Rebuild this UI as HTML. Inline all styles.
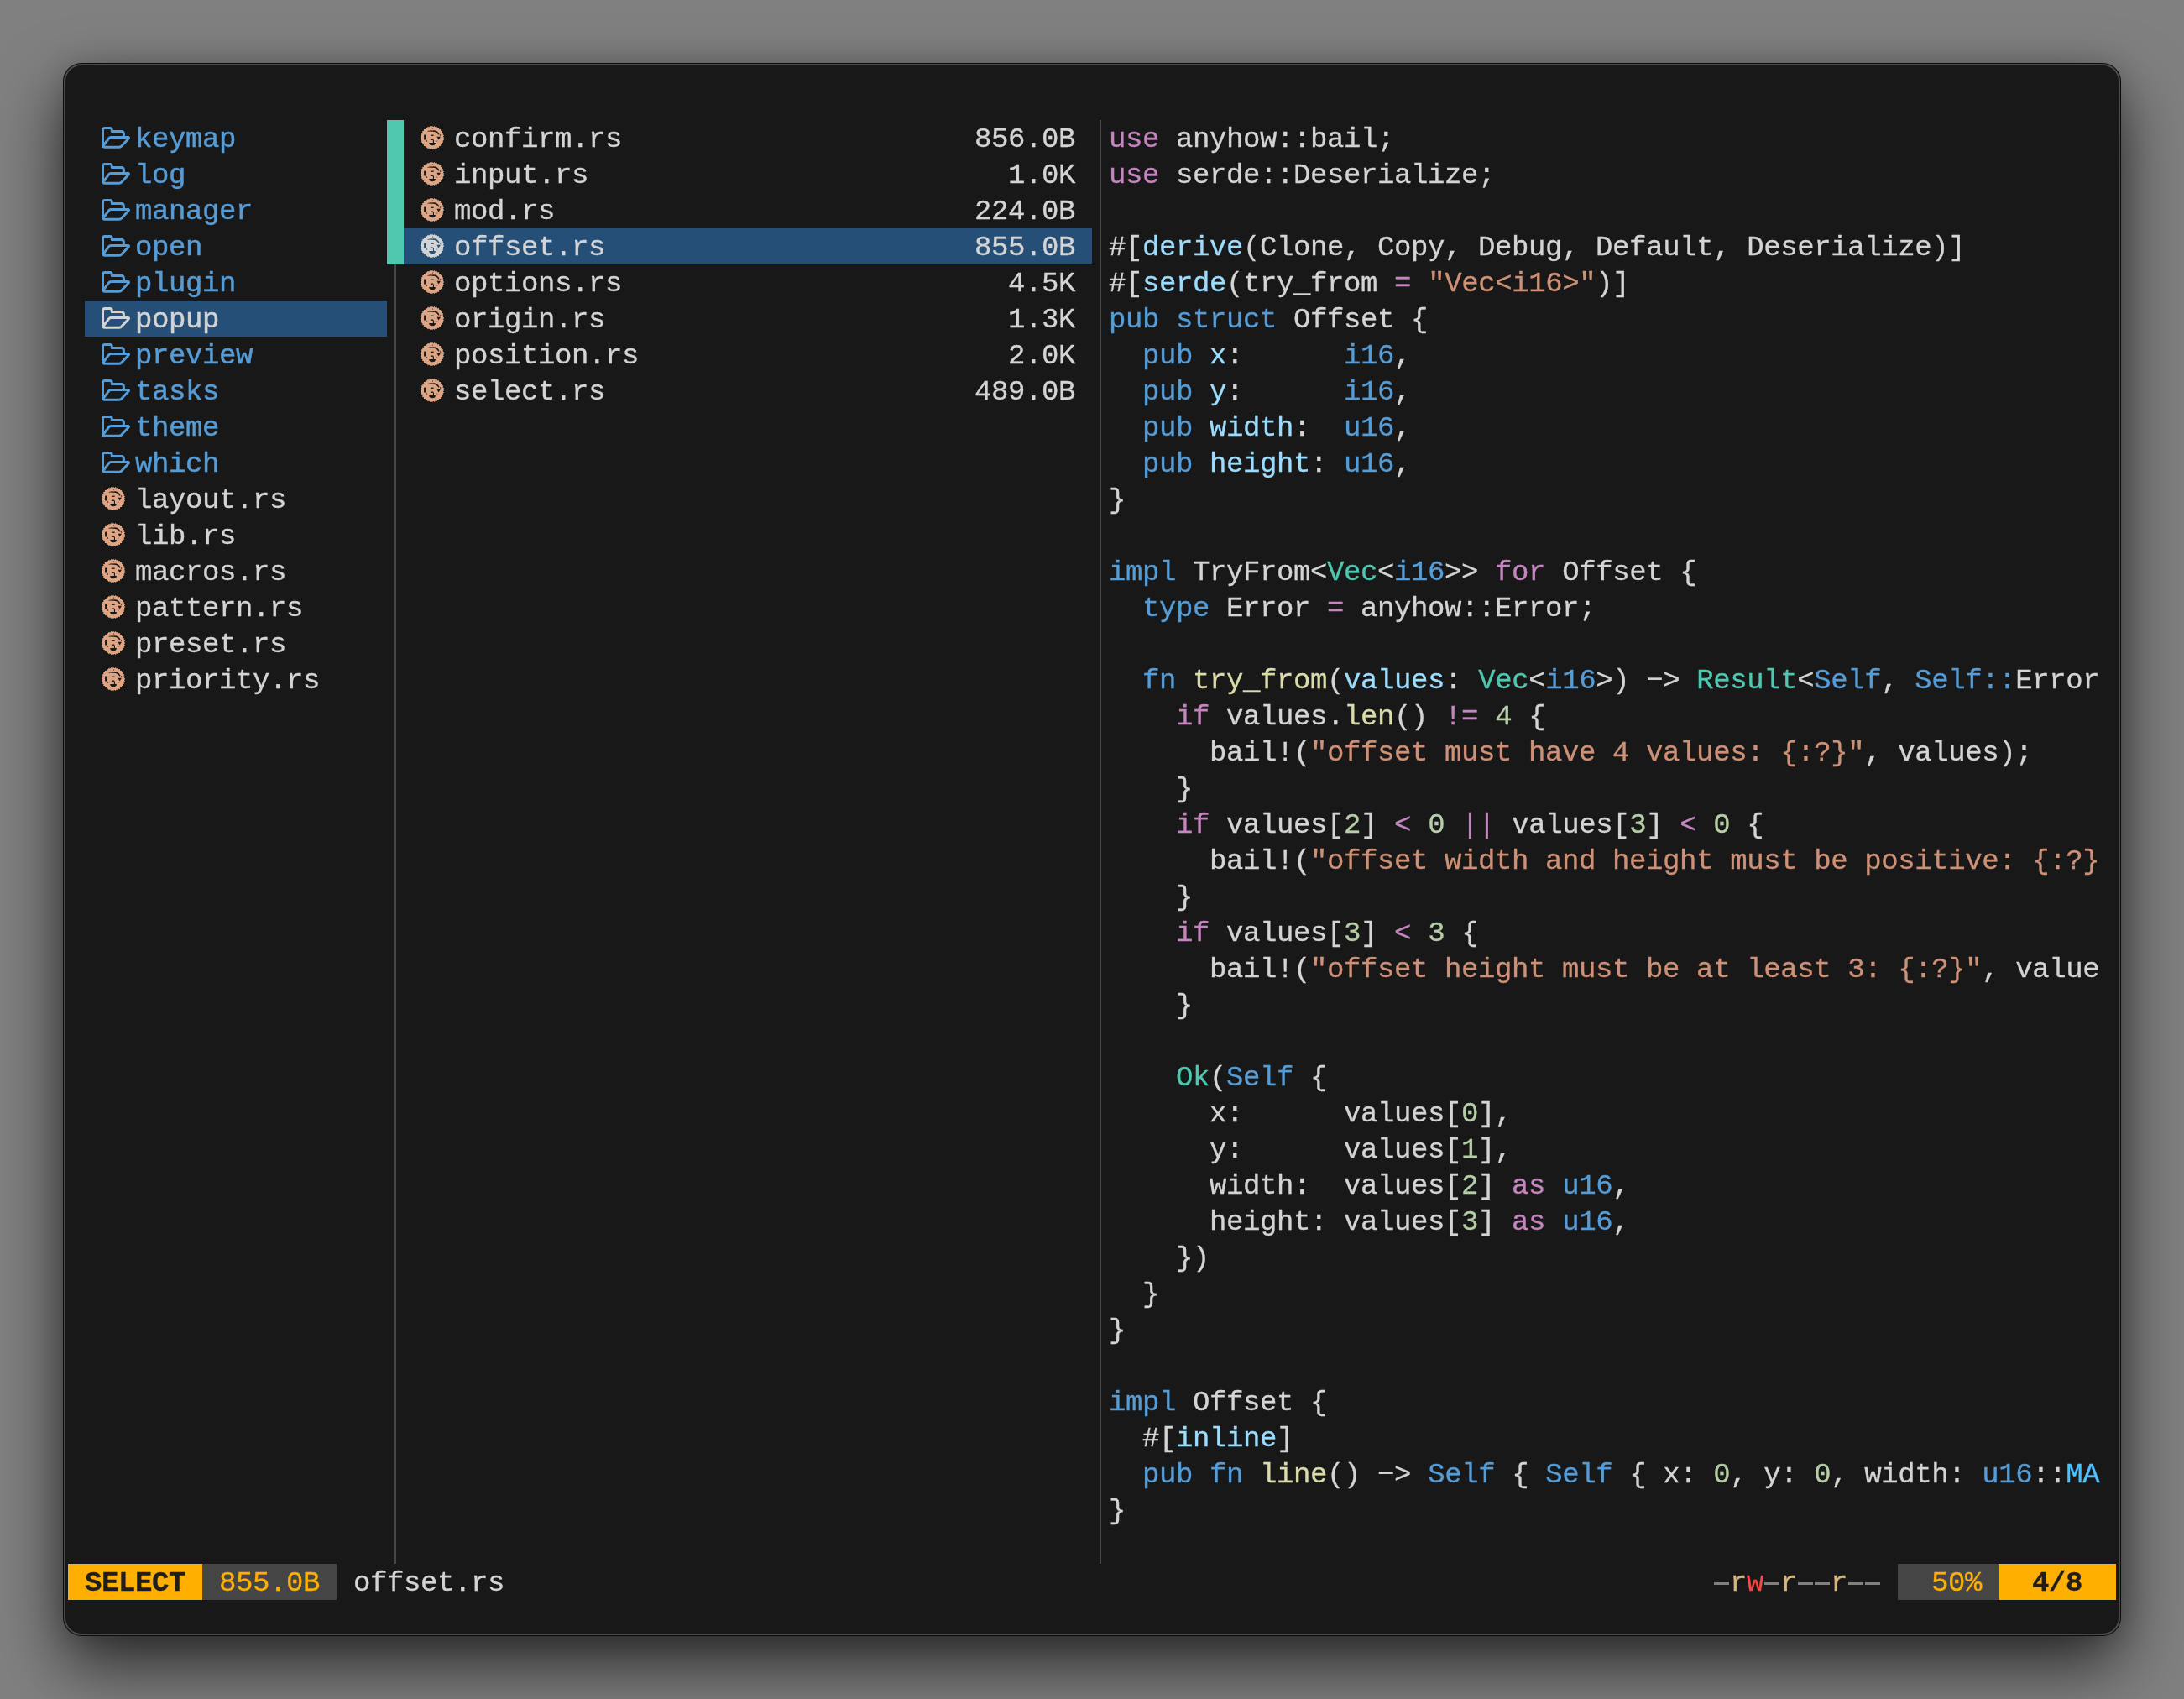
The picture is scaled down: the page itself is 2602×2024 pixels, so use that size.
<!DOCTYPE html>
<html><head><meta charset="utf-8"><style>
html,body{margin:0;padding:0;width:2602px;height:2024px;overflow:hidden;background:#808080;}
.win{position:absolute;left:76px;top:76px;width:2450px;height:1872px;border-radius:21px;background:#181818;
 box-shadow:0 0 0 1px #0a0a0a, inset 0 0 0 2px #4a4a4a, 0 34px 80px rgba(0,0,0,0.7), 0 0 30px rgba(0,0,0,0.15);}
.l{position:absolute;will-change:transform;font-family:"Liberation Mono",monospace;font-size:34px;letter-spacing:-0.4px;white-space:pre;line-height:43px;height:43px;color:#d4d4d4;-webkit-text-stroke:0.3px currentColor;}
.b{font-weight:bold;}
.m span{-webkit-text-stroke:0.45px currentColor;}
.l span{}
.r{position:absolute;}
.ic{position:absolute;}
</style></head><body>
<div class="win"></div>
<div class="r" style="left:101px;top:358px;width:360px;height:43px;background:#264f78;"></div>
<div class="r" style="left:481px;top:272px;width:820px;height:43px;background:#264f78;"></div>
<div class="r" style="left:461px;top:143px;width:20px;height:172px;background:#4ec9b0;"></div>
<div class="r" style="left:81px;top:1863px;width:160px;height:43px;background:#ffaf00;"></div>
<div class="r" style="left:241px;top:1863px;width:160px;height:43px;background:#454545;"></div>
<div class="r" style="left:2261px;top:1863px;width:120px;height:43px;background:#454545;"></div>
<div class="r" style="left:2381px;top:1863px;width:140px;height:43px;background:#ffaf00;"></div>
<div class="r" style="left:2042px;top:1885px;width:18px;height:3px;background:#808080"></div>
<div class="r" style="left:2102px;top:1885px;width:18px;height:3px;background:#808080"></div>
<div class="r" style="left:2142px;top:1885px;width:18px;height:3px;background:#808080"></div>
<div class="r" style="left:2162px;top:1885px;width:18px;height:3px;background:#808080"></div>
<div class="r" style="left:2202px;top:1885px;width:18px;height:3px;background:#808080"></div>
<div class="r" style="left:2222px;top:1885px;width:18px;height:3px;background:#808080"></div>
<div class="r" style="left:470px;top:315px;width:2px;height:1548px;background:#464646"></div><div class="r" style="left:1310px;top:143px;width:2px;height:1720px;background:#464646"></div>
<svg class="ic" style="left:121px;top:151px" width="36" height="30" viewBox="0 0 36 30"><path d="M26.4 12.5V8.5Q26.4 5.5 23.5 5.5H12.3V4Q12.3 1.5 9.8 1.5H4Q1.5 1.5 1.5 4V21.7Q1.5 24.2 4 24.2H21Q22.8 24.2 24 22.8L32.2 14Q33.2 12.5 31.4 12.5H11Q9.6 12.5 8.8 13.6L2.2 22.4" fill="none" stroke="#569cd6" stroke-width="3" stroke-linejoin="round" stroke-linecap="round"/></svg>
<svg class="ic" style="left:121px;top:194px" width="36" height="30" viewBox="0 0 36 30"><path d="M26.4 12.5V8.5Q26.4 5.5 23.5 5.5H12.3V4Q12.3 1.5 9.8 1.5H4Q1.5 1.5 1.5 4V21.7Q1.5 24.2 4 24.2H21Q22.8 24.2 24 22.8L32.2 14Q33.2 12.5 31.4 12.5H11Q9.6 12.5 8.8 13.6L2.2 22.4" fill="none" stroke="#569cd6" stroke-width="3" stroke-linejoin="round" stroke-linecap="round"/></svg>
<svg class="ic" style="left:121px;top:237px" width="36" height="30" viewBox="0 0 36 30"><path d="M26.4 12.5V8.5Q26.4 5.5 23.5 5.5H12.3V4Q12.3 1.5 9.8 1.5H4Q1.5 1.5 1.5 4V21.7Q1.5 24.2 4 24.2H21Q22.8 24.2 24 22.8L32.2 14Q33.2 12.5 31.4 12.5H11Q9.6 12.5 8.8 13.6L2.2 22.4" fill="none" stroke="#569cd6" stroke-width="3" stroke-linejoin="round" stroke-linecap="round"/></svg>
<svg class="ic" style="left:121px;top:280px" width="36" height="30" viewBox="0 0 36 30"><path d="M26.4 12.5V8.5Q26.4 5.5 23.5 5.5H12.3V4Q12.3 1.5 9.8 1.5H4Q1.5 1.5 1.5 4V21.7Q1.5 24.2 4 24.2H21Q22.8 24.2 24 22.8L32.2 14Q33.2 12.5 31.4 12.5H11Q9.6 12.5 8.8 13.6L2.2 22.4" fill="none" stroke="#569cd6" stroke-width="3" stroke-linejoin="round" stroke-linecap="round"/></svg>
<svg class="ic" style="left:121px;top:323px" width="36" height="30" viewBox="0 0 36 30"><path d="M26.4 12.5V8.5Q26.4 5.5 23.5 5.5H12.3V4Q12.3 1.5 9.8 1.5H4Q1.5 1.5 1.5 4V21.7Q1.5 24.2 4 24.2H21Q22.8 24.2 24 22.8L32.2 14Q33.2 12.5 31.4 12.5H11Q9.6 12.5 8.8 13.6L2.2 22.4" fill="none" stroke="#569cd6" stroke-width="3" stroke-linejoin="round" stroke-linecap="round"/></svg>
<svg class="ic" style="left:121px;top:366px" width="36" height="30" viewBox="0 0 36 30"><path d="M26.4 12.5V8.5Q26.4 5.5 23.5 5.5H12.3V4Q12.3 1.5 9.8 1.5H4Q1.5 1.5 1.5 4V21.7Q1.5 24.2 4 24.2H21Q22.8 24.2 24 22.8L32.2 14Q33.2 12.5 31.4 12.5H11Q9.6 12.5 8.8 13.6L2.2 22.4" fill="none" stroke="#d4d4d4" stroke-width="3" stroke-linejoin="round" stroke-linecap="round"/></svg>
<svg class="ic" style="left:121px;top:409px" width="36" height="30" viewBox="0 0 36 30"><path d="M26.4 12.5V8.5Q26.4 5.5 23.5 5.5H12.3V4Q12.3 1.5 9.8 1.5H4Q1.5 1.5 1.5 4V21.7Q1.5 24.2 4 24.2H21Q22.8 24.2 24 22.8L32.2 14Q33.2 12.5 31.4 12.5H11Q9.6 12.5 8.8 13.6L2.2 22.4" fill="none" stroke="#569cd6" stroke-width="3" stroke-linejoin="round" stroke-linecap="round"/></svg>
<svg class="ic" style="left:121px;top:452px" width="36" height="30" viewBox="0 0 36 30"><path d="M26.4 12.5V8.5Q26.4 5.5 23.5 5.5H12.3V4Q12.3 1.5 9.8 1.5H4Q1.5 1.5 1.5 4V21.7Q1.5 24.2 4 24.2H21Q22.8 24.2 24 22.8L32.2 14Q33.2 12.5 31.4 12.5H11Q9.6 12.5 8.8 13.6L2.2 22.4" fill="none" stroke="#569cd6" stroke-width="3" stroke-linejoin="round" stroke-linecap="round"/></svg>
<svg class="ic" style="left:121px;top:495px" width="36" height="30" viewBox="0 0 36 30"><path d="M26.4 12.5V8.5Q26.4 5.5 23.5 5.5H12.3V4Q12.3 1.5 9.8 1.5H4Q1.5 1.5 1.5 4V21.7Q1.5 24.2 4 24.2H21Q22.8 24.2 24 22.8L32.2 14Q33.2 12.5 31.4 12.5H11Q9.6 12.5 8.8 13.6L2.2 22.4" fill="none" stroke="#569cd6" stroke-width="3" stroke-linejoin="round" stroke-linecap="round"/></svg>
<svg class="ic" style="left:121px;top:538px" width="36" height="30" viewBox="0 0 36 30"><path d="M26.4 12.5V8.5Q26.4 5.5 23.5 5.5H12.3V4Q12.3 1.5 9.8 1.5H4Q1.5 1.5 1.5 4V21.7Q1.5 24.2 4 24.2H21Q22.8 24.2 24 22.8L32.2 14Q33.2 12.5 31.4 12.5H11Q9.6 12.5 8.8 13.6L2.2 22.4" fill="none" stroke="#569cd6" stroke-width="3" stroke-linejoin="round" stroke-linecap="round"/></svg>
<svg class="ic" style="left:118.7px;top:577.8px" width="32" height="32" viewBox="-16 -16 32 32"><circle r="13" fill="#dea584"/><path d="M0.00 -14.30L1.26 -12.84L2.79 -14.03L3.74 -12.34L5.47 -13.21L6.08 -11.38L7.94 -11.89L8.18 -9.97L10.11 -10.11L9.97 -8.18L11.89 -7.94L11.38 -6.08L13.21 -5.47L12.34 -3.74L14.03 -2.79L12.84 -1.26L14.30 0.00L12.84 1.26L14.03 2.79L12.34 3.74L13.21 5.47L11.38 6.08L11.89 7.94L9.97 8.18L10.11 10.11L8.18 9.97L7.94 11.89L6.08 11.38L5.47 13.21L3.74 12.34L2.79 14.03L1.26 12.84L0.00 14.30L-1.26 12.84L-2.79 14.03L-3.74 12.34L-5.47 13.21L-6.08 11.38L-7.94 11.89L-8.18 9.97L-10.11 10.11L-9.97 8.18L-11.89 7.94L-11.38 6.08L-13.21 5.47L-12.34 3.74L-14.03 2.79L-12.84 1.26L-14.30 0.00L-12.84 -1.26L-14.03 -2.79L-12.34 -3.74L-13.21 -5.47L-11.38 -6.08L-11.89 -7.94L-9.97 -8.18L-10.11 -10.11L-8.18 -9.97L-7.94 -11.89L-6.08 -11.38L-5.47 -13.21L-3.74 -12.34L-2.79 -14.03L-1.26 -12.84Z" fill="#dea584"/><g fill="#181818" stroke="none"><path d="M-6.2 -7.2Q-4 -9.4 0.3 -8.6Q6.5 -9.2 8.6 -3.8L7.2 -3.4Q5.5 -7.3 0.3 -7.2Q-4 -7.6 -6.2 -7.2Z"/><rect x="-9.9" y="-3.4" width="2.7" height="5.9"/><rect x="-2.1" y="-3.4" width="3.8" height="1.3"/><rect x="-2.1" y="1.5" width="3.2" height="1.4"/><rect x="0.9" y="2.5" width="1.1" height="4"/><path d="M-3.8 6H3.9Q3.9 9.2 0 9.2Q-3.8 9.2 -3.8 6Z"/><path d="M5.5 -1.3H10L7.5 2.5Z"/><circle cx="0.6" cy="-11" r="0.6"/><circle cx="9.6" cy="-3" r="0.7"/><circle cx="-6.5" cy="4" r="0.7"/><circle cx="5.9" cy="4" r="0.5"/></g></svg>
<svg class="ic" style="left:118.7px;top:620.8px" width="32" height="32" viewBox="-16 -16 32 32"><circle r="13" fill="#dea584"/><path d="M0.00 -14.30L1.26 -12.84L2.79 -14.03L3.74 -12.34L5.47 -13.21L6.08 -11.38L7.94 -11.89L8.18 -9.97L10.11 -10.11L9.97 -8.18L11.89 -7.94L11.38 -6.08L13.21 -5.47L12.34 -3.74L14.03 -2.79L12.84 -1.26L14.30 0.00L12.84 1.26L14.03 2.79L12.34 3.74L13.21 5.47L11.38 6.08L11.89 7.94L9.97 8.18L10.11 10.11L8.18 9.97L7.94 11.89L6.08 11.38L5.47 13.21L3.74 12.34L2.79 14.03L1.26 12.84L0.00 14.30L-1.26 12.84L-2.79 14.03L-3.74 12.34L-5.47 13.21L-6.08 11.38L-7.94 11.89L-8.18 9.97L-10.11 10.11L-9.97 8.18L-11.89 7.94L-11.38 6.08L-13.21 5.47L-12.34 3.74L-14.03 2.79L-12.84 1.26L-14.30 0.00L-12.84 -1.26L-14.03 -2.79L-12.34 -3.74L-13.21 -5.47L-11.38 -6.08L-11.89 -7.94L-9.97 -8.18L-10.11 -10.11L-8.18 -9.97L-7.94 -11.89L-6.08 -11.38L-5.47 -13.21L-3.74 -12.34L-2.79 -14.03L-1.26 -12.84Z" fill="#dea584"/><g fill="#181818" stroke="none"><path d="M-6.2 -7.2Q-4 -9.4 0.3 -8.6Q6.5 -9.2 8.6 -3.8L7.2 -3.4Q5.5 -7.3 0.3 -7.2Q-4 -7.6 -6.2 -7.2Z"/><rect x="-9.9" y="-3.4" width="2.7" height="5.9"/><rect x="-2.1" y="-3.4" width="3.8" height="1.3"/><rect x="-2.1" y="1.5" width="3.2" height="1.4"/><rect x="0.9" y="2.5" width="1.1" height="4"/><path d="M-3.8 6H3.9Q3.9 9.2 0 9.2Q-3.8 9.2 -3.8 6Z"/><path d="M5.5 -1.3H10L7.5 2.5Z"/><circle cx="0.6" cy="-11" r="0.6"/><circle cx="9.6" cy="-3" r="0.7"/><circle cx="-6.5" cy="4" r="0.7"/><circle cx="5.9" cy="4" r="0.5"/></g></svg>
<svg class="ic" style="left:118.7px;top:663.8px" width="32" height="32" viewBox="-16 -16 32 32"><circle r="13" fill="#dea584"/><path d="M0.00 -14.30L1.26 -12.84L2.79 -14.03L3.74 -12.34L5.47 -13.21L6.08 -11.38L7.94 -11.89L8.18 -9.97L10.11 -10.11L9.97 -8.18L11.89 -7.94L11.38 -6.08L13.21 -5.47L12.34 -3.74L14.03 -2.79L12.84 -1.26L14.30 0.00L12.84 1.26L14.03 2.79L12.34 3.74L13.21 5.47L11.38 6.08L11.89 7.94L9.97 8.18L10.11 10.11L8.18 9.97L7.94 11.89L6.08 11.38L5.47 13.21L3.74 12.34L2.79 14.03L1.26 12.84L0.00 14.30L-1.26 12.84L-2.79 14.03L-3.74 12.34L-5.47 13.21L-6.08 11.38L-7.94 11.89L-8.18 9.97L-10.11 10.11L-9.97 8.18L-11.89 7.94L-11.38 6.08L-13.21 5.47L-12.34 3.74L-14.03 2.79L-12.84 1.26L-14.30 0.00L-12.84 -1.26L-14.03 -2.79L-12.34 -3.74L-13.21 -5.47L-11.38 -6.08L-11.89 -7.94L-9.97 -8.18L-10.11 -10.11L-8.18 -9.97L-7.94 -11.89L-6.08 -11.38L-5.47 -13.21L-3.74 -12.34L-2.79 -14.03L-1.26 -12.84Z" fill="#dea584"/><g fill="#181818" stroke="none"><path d="M-6.2 -7.2Q-4 -9.4 0.3 -8.6Q6.5 -9.2 8.6 -3.8L7.2 -3.4Q5.5 -7.3 0.3 -7.2Q-4 -7.6 -6.2 -7.2Z"/><rect x="-9.9" y="-3.4" width="2.7" height="5.9"/><rect x="-2.1" y="-3.4" width="3.8" height="1.3"/><rect x="-2.1" y="1.5" width="3.2" height="1.4"/><rect x="0.9" y="2.5" width="1.1" height="4"/><path d="M-3.8 6H3.9Q3.9 9.2 0 9.2Q-3.8 9.2 -3.8 6Z"/><path d="M5.5 -1.3H10L7.5 2.5Z"/><circle cx="0.6" cy="-11" r="0.6"/><circle cx="9.6" cy="-3" r="0.7"/><circle cx="-6.5" cy="4" r="0.7"/><circle cx="5.9" cy="4" r="0.5"/></g></svg>
<svg class="ic" style="left:118.7px;top:706.8px" width="32" height="32" viewBox="-16 -16 32 32"><circle r="13" fill="#dea584"/><path d="M0.00 -14.30L1.26 -12.84L2.79 -14.03L3.74 -12.34L5.47 -13.21L6.08 -11.38L7.94 -11.89L8.18 -9.97L10.11 -10.11L9.97 -8.18L11.89 -7.94L11.38 -6.08L13.21 -5.47L12.34 -3.74L14.03 -2.79L12.84 -1.26L14.30 0.00L12.84 1.26L14.03 2.79L12.34 3.74L13.21 5.47L11.38 6.08L11.89 7.94L9.97 8.18L10.11 10.11L8.18 9.97L7.94 11.89L6.08 11.38L5.47 13.21L3.74 12.34L2.79 14.03L1.26 12.84L0.00 14.30L-1.26 12.84L-2.79 14.03L-3.74 12.34L-5.47 13.21L-6.08 11.38L-7.94 11.89L-8.18 9.97L-10.11 10.11L-9.97 8.18L-11.89 7.94L-11.38 6.08L-13.21 5.47L-12.34 3.74L-14.03 2.79L-12.84 1.26L-14.30 0.00L-12.84 -1.26L-14.03 -2.79L-12.34 -3.74L-13.21 -5.47L-11.38 -6.08L-11.89 -7.94L-9.97 -8.18L-10.11 -10.11L-8.18 -9.97L-7.94 -11.89L-6.08 -11.38L-5.47 -13.21L-3.74 -12.34L-2.79 -14.03L-1.26 -12.84Z" fill="#dea584"/><g fill="#181818" stroke="none"><path d="M-6.2 -7.2Q-4 -9.4 0.3 -8.6Q6.5 -9.2 8.6 -3.8L7.2 -3.4Q5.5 -7.3 0.3 -7.2Q-4 -7.6 -6.2 -7.2Z"/><rect x="-9.9" y="-3.4" width="2.7" height="5.9"/><rect x="-2.1" y="-3.4" width="3.8" height="1.3"/><rect x="-2.1" y="1.5" width="3.2" height="1.4"/><rect x="0.9" y="2.5" width="1.1" height="4"/><path d="M-3.8 6H3.9Q3.9 9.2 0 9.2Q-3.8 9.2 -3.8 6Z"/><path d="M5.5 -1.3H10L7.5 2.5Z"/><circle cx="0.6" cy="-11" r="0.6"/><circle cx="9.6" cy="-3" r="0.7"/><circle cx="-6.5" cy="4" r="0.7"/><circle cx="5.9" cy="4" r="0.5"/></g></svg>
<svg class="ic" style="left:118.7px;top:749.8px" width="32" height="32" viewBox="-16 -16 32 32"><circle r="13" fill="#dea584"/><path d="M0.00 -14.30L1.26 -12.84L2.79 -14.03L3.74 -12.34L5.47 -13.21L6.08 -11.38L7.94 -11.89L8.18 -9.97L10.11 -10.11L9.97 -8.18L11.89 -7.94L11.38 -6.08L13.21 -5.47L12.34 -3.74L14.03 -2.79L12.84 -1.26L14.30 0.00L12.84 1.26L14.03 2.79L12.34 3.74L13.21 5.47L11.38 6.08L11.89 7.94L9.97 8.18L10.11 10.11L8.18 9.97L7.94 11.89L6.08 11.38L5.47 13.21L3.74 12.34L2.79 14.03L1.26 12.84L0.00 14.30L-1.26 12.84L-2.79 14.03L-3.74 12.34L-5.47 13.21L-6.08 11.38L-7.94 11.89L-8.18 9.97L-10.11 10.11L-9.97 8.18L-11.89 7.94L-11.38 6.08L-13.21 5.47L-12.34 3.74L-14.03 2.79L-12.84 1.26L-14.30 0.00L-12.84 -1.26L-14.03 -2.79L-12.34 -3.74L-13.21 -5.47L-11.38 -6.08L-11.89 -7.94L-9.97 -8.18L-10.11 -10.11L-8.18 -9.97L-7.94 -11.89L-6.08 -11.38L-5.47 -13.21L-3.74 -12.34L-2.79 -14.03L-1.26 -12.84Z" fill="#dea584"/><g fill="#181818" stroke="none"><path d="M-6.2 -7.2Q-4 -9.4 0.3 -8.6Q6.5 -9.2 8.6 -3.8L7.2 -3.4Q5.5 -7.3 0.3 -7.2Q-4 -7.6 -6.2 -7.2Z"/><rect x="-9.9" y="-3.4" width="2.7" height="5.9"/><rect x="-2.1" y="-3.4" width="3.8" height="1.3"/><rect x="-2.1" y="1.5" width="3.2" height="1.4"/><rect x="0.9" y="2.5" width="1.1" height="4"/><path d="M-3.8 6H3.9Q3.9 9.2 0 9.2Q-3.8 9.2 -3.8 6Z"/><path d="M5.5 -1.3H10L7.5 2.5Z"/><circle cx="0.6" cy="-11" r="0.6"/><circle cx="9.6" cy="-3" r="0.7"/><circle cx="-6.5" cy="4" r="0.7"/><circle cx="5.9" cy="4" r="0.5"/></g></svg>
<svg class="ic" style="left:118.7px;top:792.8px" width="32" height="32" viewBox="-16 -16 32 32"><circle r="13" fill="#dea584"/><path d="M0.00 -14.30L1.26 -12.84L2.79 -14.03L3.74 -12.34L5.47 -13.21L6.08 -11.38L7.94 -11.89L8.18 -9.97L10.11 -10.11L9.97 -8.18L11.89 -7.94L11.38 -6.08L13.21 -5.47L12.34 -3.74L14.03 -2.79L12.84 -1.26L14.30 0.00L12.84 1.26L14.03 2.79L12.34 3.74L13.21 5.47L11.38 6.08L11.89 7.94L9.97 8.18L10.11 10.11L8.18 9.97L7.94 11.89L6.08 11.38L5.47 13.21L3.74 12.34L2.79 14.03L1.26 12.84L0.00 14.30L-1.26 12.84L-2.79 14.03L-3.74 12.34L-5.47 13.21L-6.08 11.38L-7.94 11.89L-8.18 9.97L-10.11 10.11L-9.97 8.18L-11.89 7.94L-11.38 6.08L-13.21 5.47L-12.34 3.74L-14.03 2.79L-12.84 1.26L-14.30 0.00L-12.84 -1.26L-14.03 -2.79L-12.34 -3.74L-13.21 -5.47L-11.38 -6.08L-11.89 -7.94L-9.97 -8.18L-10.11 -10.11L-8.18 -9.97L-7.94 -11.89L-6.08 -11.38L-5.47 -13.21L-3.74 -12.34L-2.79 -14.03L-1.26 -12.84Z" fill="#dea584"/><g fill="#181818" stroke="none"><path d="M-6.2 -7.2Q-4 -9.4 0.3 -8.6Q6.5 -9.2 8.6 -3.8L7.2 -3.4Q5.5 -7.3 0.3 -7.2Q-4 -7.6 -6.2 -7.2Z"/><rect x="-9.9" y="-3.4" width="2.7" height="5.9"/><rect x="-2.1" y="-3.4" width="3.8" height="1.3"/><rect x="-2.1" y="1.5" width="3.2" height="1.4"/><rect x="0.9" y="2.5" width="1.1" height="4"/><path d="M-3.8 6H3.9Q3.9 9.2 0 9.2Q-3.8 9.2 -3.8 6Z"/><path d="M5.5 -1.3H10L7.5 2.5Z"/><circle cx="0.6" cy="-11" r="0.6"/><circle cx="9.6" cy="-3" r="0.7"/><circle cx="-6.5" cy="4" r="0.7"/><circle cx="5.9" cy="4" r="0.5"/></g></svg>
<svg class="ic" style="left:498.7px;top:147.8px" width="32" height="32" viewBox="-16 -16 32 32"><circle r="13" fill="#dea584"/><path d="M0.00 -14.30L1.26 -12.84L2.79 -14.03L3.74 -12.34L5.47 -13.21L6.08 -11.38L7.94 -11.89L8.18 -9.97L10.11 -10.11L9.97 -8.18L11.89 -7.94L11.38 -6.08L13.21 -5.47L12.34 -3.74L14.03 -2.79L12.84 -1.26L14.30 0.00L12.84 1.26L14.03 2.79L12.34 3.74L13.21 5.47L11.38 6.08L11.89 7.94L9.97 8.18L10.11 10.11L8.18 9.97L7.94 11.89L6.08 11.38L5.47 13.21L3.74 12.34L2.79 14.03L1.26 12.84L0.00 14.30L-1.26 12.84L-2.79 14.03L-3.74 12.34L-5.47 13.21L-6.08 11.38L-7.94 11.89L-8.18 9.97L-10.11 10.11L-9.97 8.18L-11.89 7.94L-11.38 6.08L-13.21 5.47L-12.34 3.74L-14.03 2.79L-12.84 1.26L-14.30 0.00L-12.84 -1.26L-14.03 -2.79L-12.34 -3.74L-13.21 -5.47L-11.38 -6.08L-11.89 -7.94L-9.97 -8.18L-10.11 -10.11L-8.18 -9.97L-7.94 -11.89L-6.08 -11.38L-5.47 -13.21L-3.74 -12.34L-2.79 -14.03L-1.26 -12.84Z" fill="#dea584"/><g fill="#181818" stroke="none"><path d="M-6.2 -7.2Q-4 -9.4 0.3 -8.6Q6.5 -9.2 8.6 -3.8L7.2 -3.4Q5.5 -7.3 0.3 -7.2Q-4 -7.6 -6.2 -7.2Z"/><rect x="-9.9" y="-3.4" width="2.7" height="5.9"/><rect x="-2.1" y="-3.4" width="3.8" height="1.3"/><rect x="-2.1" y="1.5" width="3.2" height="1.4"/><rect x="0.9" y="2.5" width="1.1" height="4"/><path d="M-3.8 6H3.9Q3.9 9.2 0 9.2Q-3.8 9.2 -3.8 6Z"/><path d="M5.5 -1.3H10L7.5 2.5Z"/><circle cx="0.6" cy="-11" r="0.6"/><circle cx="9.6" cy="-3" r="0.7"/><circle cx="-6.5" cy="4" r="0.7"/><circle cx="5.9" cy="4" r="0.5"/></g></svg>
<svg class="ic" style="left:498.7px;top:190.8px" width="32" height="32" viewBox="-16 -16 32 32"><circle r="13" fill="#dea584"/><path d="M0.00 -14.30L1.26 -12.84L2.79 -14.03L3.74 -12.34L5.47 -13.21L6.08 -11.38L7.94 -11.89L8.18 -9.97L10.11 -10.11L9.97 -8.18L11.89 -7.94L11.38 -6.08L13.21 -5.47L12.34 -3.74L14.03 -2.79L12.84 -1.26L14.30 0.00L12.84 1.26L14.03 2.79L12.34 3.74L13.21 5.47L11.38 6.08L11.89 7.94L9.97 8.18L10.11 10.11L8.18 9.97L7.94 11.89L6.08 11.38L5.47 13.21L3.74 12.34L2.79 14.03L1.26 12.84L0.00 14.30L-1.26 12.84L-2.79 14.03L-3.74 12.34L-5.47 13.21L-6.08 11.38L-7.94 11.89L-8.18 9.97L-10.11 10.11L-9.97 8.18L-11.89 7.94L-11.38 6.08L-13.21 5.47L-12.34 3.74L-14.03 2.79L-12.84 1.26L-14.30 0.00L-12.84 -1.26L-14.03 -2.79L-12.34 -3.74L-13.21 -5.47L-11.38 -6.08L-11.89 -7.94L-9.97 -8.18L-10.11 -10.11L-8.18 -9.97L-7.94 -11.89L-6.08 -11.38L-5.47 -13.21L-3.74 -12.34L-2.79 -14.03L-1.26 -12.84Z" fill="#dea584"/><g fill="#181818" stroke="none"><path d="M-6.2 -7.2Q-4 -9.4 0.3 -8.6Q6.5 -9.2 8.6 -3.8L7.2 -3.4Q5.5 -7.3 0.3 -7.2Q-4 -7.6 -6.2 -7.2Z"/><rect x="-9.9" y="-3.4" width="2.7" height="5.9"/><rect x="-2.1" y="-3.4" width="3.8" height="1.3"/><rect x="-2.1" y="1.5" width="3.2" height="1.4"/><rect x="0.9" y="2.5" width="1.1" height="4"/><path d="M-3.8 6H3.9Q3.9 9.2 0 9.2Q-3.8 9.2 -3.8 6Z"/><path d="M5.5 -1.3H10L7.5 2.5Z"/><circle cx="0.6" cy="-11" r="0.6"/><circle cx="9.6" cy="-3" r="0.7"/><circle cx="-6.5" cy="4" r="0.7"/><circle cx="5.9" cy="4" r="0.5"/></g></svg>
<svg class="ic" style="left:498.7px;top:233.8px" width="32" height="32" viewBox="-16 -16 32 32"><circle r="13" fill="#dea584"/><path d="M0.00 -14.30L1.26 -12.84L2.79 -14.03L3.74 -12.34L5.47 -13.21L6.08 -11.38L7.94 -11.89L8.18 -9.97L10.11 -10.11L9.97 -8.18L11.89 -7.94L11.38 -6.08L13.21 -5.47L12.34 -3.74L14.03 -2.79L12.84 -1.26L14.30 0.00L12.84 1.26L14.03 2.79L12.34 3.74L13.21 5.47L11.38 6.08L11.89 7.94L9.97 8.18L10.11 10.11L8.18 9.97L7.94 11.89L6.08 11.38L5.47 13.21L3.74 12.34L2.79 14.03L1.26 12.84L0.00 14.30L-1.26 12.84L-2.79 14.03L-3.74 12.34L-5.47 13.21L-6.08 11.38L-7.94 11.89L-8.18 9.97L-10.11 10.11L-9.97 8.18L-11.89 7.94L-11.38 6.08L-13.21 5.47L-12.34 3.74L-14.03 2.79L-12.84 1.26L-14.30 0.00L-12.84 -1.26L-14.03 -2.79L-12.34 -3.74L-13.21 -5.47L-11.38 -6.08L-11.89 -7.94L-9.97 -8.18L-10.11 -10.11L-8.18 -9.97L-7.94 -11.89L-6.08 -11.38L-5.47 -13.21L-3.74 -12.34L-2.79 -14.03L-1.26 -12.84Z" fill="#dea584"/><g fill="#181818" stroke="none"><path d="M-6.2 -7.2Q-4 -9.4 0.3 -8.6Q6.5 -9.2 8.6 -3.8L7.2 -3.4Q5.5 -7.3 0.3 -7.2Q-4 -7.6 -6.2 -7.2Z"/><rect x="-9.9" y="-3.4" width="2.7" height="5.9"/><rect x="-2.1" y="-3.4" width="3.8" height="1.3"/><rect x="-2.1" y="1.5" width="3.2" height="1.4"/><rect x="0.9" y="2.5" width="1.1" height="4"/><path d="M-3.8 6H3.9Q3.9 9.2 0 9.2Q-3.8 9.2 -3.8 6Z"/><path d="M5.5 -1.3H10L7.5 2.5Z"/><circle cx="0.6" cy="-11" r="0.6"/><circle cx="9.6" cy="-3" r="0.7"/><circle cx="-6.5" cy="4" r="0.7"/><circle cx="5.9" cy="4" r="0.5"/></g></svg>
<svg class="ic" style="left:498.7px;top:276.8px" width="32" height="32" viewBox="-16 -16 32 32"><circle r="13" fill="#d4d4d4"/><path d="M0.00 -14.30L1.26 -12.84L2.79 -14.03L3.74 -12.34L5.47 -13.21L6.08 -11.38L7.94 -11.89L8.18 -9.97L10.11 -10.11L9.97 -8.18L11.89 -7.94L11.38 -6.08L13.21 -5.47L12.34 -3.74L14.03 -2.79L12.84 -1.26L14.30 0.00L12.84 1.26L14.03 2.79L12.34 3.74L13.21 5.47L11.38 6.08L11.89 7.94L9.97 8.18L10.11 10.11L8.18 9.97L7.94 11.89L6.08 11.38L5.47 13.21L3.74 12.34L2.79 14.03L1.26 12.84L0.00 14.30L-1.26 12.84L-2.79 14.03L-3.74 12.34L-5.47 13.21L-6.08 11.38L-7.94 11.89L-8.18 9.97L-10.11 10.11L-9.97 8.18L-11.89 7.94L-11.38 6.08L-13.21 5.47L-12.34 3.74L-14.03 2.79L-12.84 1.26L-14.30 0.00L-12.84 -1.26L-14.03 -2.79L-12.34 -3.74L-13.21 -5.47L-11.38 -6.08L-11.89 -7.94L-9.97 -8.18L-10.11 -10.11L-8.18 -9.97L-7.94 -11.89L-6.08 -11.38L-5.47 -13.21L-3.74 -12.34L-2.79 -14.03L-1.26 -12.84Z" fill="#d4d4d4"/><g fill="#264f78" stroke="none"><path d="M-6.2 -7.2Q-4 -9.4 0.3 -8.6Q6.5 -9.2 8.6 -3.8L7.2 -3.4Q5.5 -7.3 0.3 -7.2Q-4 -7.6 -6.2 -7.2Z"/><rect x="-9.9" y="-3.4" width="2.7" height="5.9"/><rect x="-2.1" y="-3.4" width="3.8" height="1.3"/><rect x="-2.1" y="1.5" width="3.2" height="1.4"/><rect x="0.9" y="2.5" width="1.1" height="4"/><path d="M-3.8 6H3.9Q3.9 9.2 0 9.2Q-3.8 9.2 -3.8 6Z"/><path d="M5.5 -1.3H10L7.5 2.5Z"/><circle cx="0.6" cy="-11" r="0.6"/><circle cx="9.6" cy="-3" r="0.7"/><circle cx="-6.5" cy="4" r="0.7"/><circle cx="5.9" cy="4" r="0.5"/></g></svg>
<svg class="ic" style="left:498.7px;top:319.8px" width="32" height="32" viewBox="-16 -16 32 32"><circle r="13" fill="#dea584"/><path d="M0.00 -14.30L1.26 -12.84L2.79 -14.03L3.74 -12.34L5.47 -13.21L6.08 -11.38L7.94 -11.89L8.18 -9.97L10.11 -10.11L9.97 -8.18L11.89 -7.94L11.38 -6.08L13.21 -5.47L12.34 -3.74L14.03 -2.79L12.84 -1.26L14.30 0.00L12.84 1.26L14.03 2.79L12.34 3.74L13.21 5.47L11.38 6.08L11.89 7.94L9.97 8.18L10.11 10.11L8.18 9.97L7.94 11.89L6.08 11.38L5.47 13.21L3.74 12.34L2.79 14.03L1.26 12.84L0.00 14.30L-1.26 12.84L-2.79 14.03L-3.74 12.34L-5.47 13.21L-6.08 11.38L-7.94 11.89L-8.18 9.97L-10.11 10.11L-9.97 8.18L-11.89 7.94L-11.38 6.08L-13.21 5.47L-12.34 3.74L-14.03 2.79L-12.84 1.26L-14.30 0.00L-12.84 -1.26L-14.03 -2.79L-12.34 -3.74L-13.21 -5.47L-11.38 -6.08L-11.89 -7.94L-9.97 -8.18L-10.11 -10.11L-8.18 -9.97L-7.94 -11.89L-6.08 -11.38L-5.47 -13.21L-3.74 -12.34L-2.79 -14.03L-1.26 -12.84Z" fill="#dea584"/><g fill="#181818" stroke="none"><path d="M-6.2 -7.2Q-4 -9.4 0.3 -8.6Q6.5 -9.2 8.6 -3.8L7.2 -3.4Q5.5 -7.3 0.3 -7.2Q-4 -7.6 -6.2 -7.2Z"/><rect x="-9.9" y="-3.4" width="2.7" height="5.9"/><rect x="-2.1" y="-3.4" width="3.8" height="1.3"/><rect x="-2.1" y="1.5" width="3.2" height="1.4"/><rect x="0.9" y="2.5" width="1.1" height="4"/><path d="M-3.8 6H3.9Q3.9 9.2 0 9.2Q-3.8 9.2 -3.8 6Z"/><path d="M5.5 -1.3H10L7.5 2.5Z"/><circle cx="0.6" cy="-11" r="0.6"/><circle cx="9.6" cy="-3" r="0.7"/><circle cx="-6.5" cy="4" r="0.7"/><circle cx="5.9" cy="4" r="0.5"/></g></svg>
<svg class="ic" style="left:498.7px;top:362.8px" width="32" height="32" viewBox="-16 -16 32 32"><circle r="13" fill="#dea584"/><path d="M0.00 -14.30L1.26 -12.84L2.79 -14.03L3.74 -12.34L5.47 -13.21L6.08 -11.38L7.94 -11.89L8.18 -9.97L10.11 -10.11L9.97 -8.18L11.89 -7.94L11.38 -6.08L13.21 -5.47L12.34 -3.74L14.03 -2.79L12.84 -1.26L14.30 0.00L12.84 1.26L14.03 2.79L12.34 3.74L13.21 5.47L11.38 6.08L11.89 7.94L9.97 8.18L10.11 10.11L8.18 9.97L7.94 11.89L6.08 11.38L5.47 13.21L3.74 12.34L2.79 14.03L1.26 12.84L0.00 14.30L-1.26 12.84L-2.79 14.03L-3.74 12.34L-5.47 13.21L-6.08 11.38L-7.94 11.89L-8.18 9.97L-10.11 10.11L-9.97 8.18L-11.89 7.94L-11.38 6.08L-13.21 5.47L-12.34 3.74L-14.03 2.79L-12.84 1.26L-14.30 0.00L-12.84 -1.26L-14.03 -2.79L-12.34 -3.74L-13.21 -5.47L-11.38 -6.08L-11.89 -7.94L-9.97 -8.18L-10.11 -10.11L-8.18 -9.97L-7.94 -11.89L-6.08 -11.38L-5.47 -13.21L-3.74 -12.34L-2.79 -14.03L-1.26 -12.84Z" fill="#dea584"/><g fill="#181818" stroke="none"><path d="M-6.2 -7.2Q-4 -9.4 0.3 -8.6Q6.5 -9.2 8.6 -3.8L7.2 -3.4Q5.5 -7.3 0.3 -7.2Q-4 -7.6 -6.2 -7.2Z"/><rect x="-9.9" y="-3.4" width="2.7" height="5.9"/><rect x="-2.1" y="-3.4" width="3.8" height="1.3"/><rect x="-2.1" y="1.5" width="3.2" height="1.4"/><rect x="0.9" y="2.5" width="1.1" height="4"/><path d="M-3.8 6H3.9Q3.9 9.2 0 9.2Q-3.8 9.2 -3.8 6Z"/><path d="M5.5 -1.3H10L7.5 2.5Z"/><circle cx="0.6" cy="-11" r="0.6"/><circle cx="9.6" cy="-3" r="0.7"/><circle cx="-6.5" cy="4" r="0.7"/><circle cx="5.9" cy="4" r="0.5"/></g></svg>
<svg class="ic" style="left:498.7px;top:405.8px" width="32" height="32" viewBox="-16 -16 32 32"><circle r="13" fill="#dea584"/><path d="M0.00 -14.30L1.26 -12.84L2.79 -14.03L3.74 -12.34L5.47 -13.21L6.08 -11.38L7.94 -11.89L8.18 -9.97L10.11 -10.11L9.97 -8.18L11.89 -7.94L11.38 -6.08L13.21 -5.47L12.34 -3.74L14.03 -2.79L12.84 -1.26L14.30 0.00L12.84 1.26L14.03 2.79L12.34 3.74L13.21 5.47L11.38 6.08L11.89 7.94L9.97 8.18L10.11 10.11L8.18 9.97L7.94 11.89L6.08 11.38L5.47 13.21L3.74 12.34L2.79 14.03L1.26 12.84L0.00 14.30L-1.26 12.84L-2.79 14.03L-3.74 12.34L-5.47 13.21L-6.08 11.38L-7.94 11.89L-8.18 9.97L-10.11 10.11L-9.97 8.18L-11.89 7.94L-11.38 6.08L-13.21 5.47L-12.34 3.74L-14.03 2.79L-12.84 1.26L-14.30 0.00L-12.84 -1.26L-14.03 -2.79L-12.34 -3.74L-13.21 -5.47L-11.38 -6.08L-11.89 -7.94L-9.97 -8.18L-10.11 -10.11L-8.18 -9.97L-7.94 -11.89L-6.08 -11.38L-5.47 -13.21L-3.74 -12.34L-2.79 -14.03L-1.26 -12.84Z" fill="#dea584"/><g fill="#181818" stroke="none"><path d="M-6.2 -7.2Q-4 -9.4 0.3 -8.6Q6.5 -9.2 8.6 -3.8L7.2 -3.4Q5.5 -7.3 0.3 -7.2Q-4 -7.6 -6.2 -7.2Z"/><rect x="-9.9" y="-3.4" width="2.7" height="5.9"/><rect x="-2.1" y="-3.4" width="3.8" height="1.3"/><rect x="-2.1" y="1.5" width="3.2" height="1.4"/><rect x="0.9" y="2.5" width="1.1" height="4"/><path d="M-3.8 6H3.9Q3.9 9.2 0 9.2Q-3.8 9.2 -3.8 6Z"/><path d="M5.5 -1.3H10L7.5 2.5Z"/><circle cx="0.6" cy="-11" r="0.6"/><circle cx="9.6" cy="-3" r="0.7"/><circle cx="-6.5" cy="4" r="0.7"/><circle cx="5.9" cy="4" r="0.5"/></g></svg>
<svg class="ic" style="left:498.7px;top:448.8px" width="32" height="32" viewBox="-16 -16 32 32"><circle r="13" fill="#dea584"/><path d="M0.00 -14.30L1.26 -12.84L2.79 -14.03L3.74 -12.34L5.47 -13.21L6.08 -11.38L7.94 -11.89L8.18 -9.97L10.11 -10.11L9.97 -8.18L11.89 -7.94L11.38 -6.08L13.21 -5.47L12.34 -3.74L14.03 -2.79L12.84 -1.26L14.30 0.00L12.84 1.26L14.03 2.79L12.34 3.74L13.21 5.47L11.38 6.08L11.89 7.94L9.97 8.18L10.11 10.11L8.18 9.97L7.94 11.89L6.08 11.38L5.47 13.21L3.74 12.34L2.79 14.03L1.26 12.84L0.00 14.30L-1.26 12.84L-2.79 14.03L-3.74 12.34L-5.47 13.21L-6.08 11.38L-7.94 11.89L-8.18 9.97L-10.11 10.11L-9.97 8.18L-11.89 7.94L-11.38 6.08L-13.21 5.47L-12.34 3.74L-14.03 2.79L-12.84 1.26L-14.30 0.00L-12.84 -1.26L-14.03 -2.79L-12.34 -3.74L-13.21 -5.47L-11.38 -6.08L-11.89 -7.94L-9.97 -8.18L-10.11 -10.11L-8.18 -9.97L-7.94 -11.89L-6.08 -11.38L-5.47 -13.21L-3.74 -12.34L-2.79 -14.03L-1.26 -12.84Z" fill="#dea584"/><g fill="#181818" stroke="none"><path d="M-6.2 -7.2Q-4 -9.4 0.3 -8.6Q6.5 -9.2 8.6 -3.8L7.2 -3.4Q5.5 -7.3 0.3 -7.2Q-4 -7.6 -6.2 -7.2Z"/><rect x="-9.9" y="-3.4" width="2.7" height="5.9"/><rect x="-2.1" y="-3.4" width="3.8" height="1.3"/><rect x="-2.1" y="1.5" width="3.2" height="1.4"/><rect x="0.9" y="2.5" width="1.1" height="4"/><path d="M-3.8 6H3.9Q3.9 9.2 0 9.2Q-3.8 9.2 -3.8 6Z"/><path d="M5.5 -1.3H10L7.5 2.5Z"/><circle cx="0.6" cy="-11" r="0.6"/><circle cx="9.6" cy="-3" r="0.7"/><circle cx="-6.5" cy="4" r="0.7"/><circle cx="5.9" cy="4" r="0.5"/></g></svg>
<div class="l" style="left:1321px;top:145px;"><span style="color:#c586c0">use</span><span style="color:#d4d4d4"> anyhow::bail;</span></div>
<div class="l" style="left:1321px;top:188px;"><span style="color:#c586c0">use</span><span style="color:#d4d4d4"> serde::Deserialize;</span></div>
<div class="l" style="left:1321px;top:274px;"><span style="color:#d4d4d4">#[</span><span style="color:#9cdcfe">derive</span><span style="color:#d4d4d4">(Clone, Copy, Debug, Default, Deserialize)]</span></div>
<div class="l" style="left:1321px;top:317px;"><span style="color:#d4d4d4">#[</span><span style="color:#9cdcfe">serde</span><span style="color:#d4d4d4">(try_from </span><span style="color:#c586c0">=</span><span style="color:#d4d4d4"> </span><span style="color:#ce9178">&quot;Vec&lt;i16&gt;&quot;</span><span style="color:#d4d4d4">)]</span></div>
<div class="l" style="left:1321px;top:360px;"><span style="color:#569cd6">pub struct</span><span style="color:#d4d4d4"> Offset {</span></div>
<div class="l" style="left:1321px;top:403px;"><span style="color:#d4d4d4">  </span><span style="color:#569cd6">pub</span><span style="color:#d4d4d4"> </span><span style="color:#9cdcfe">x</span><span style="color:#d4d4d4">:      </span><span style="color:#569cd6">i16</span><span style="color:#d4d4d4">,</span></div>
<div class="l" style="left:1321px;top:446px;"><span style="color:#d4d4d4">  </span><span style="color:#569cd6">pub</span><span style="color:#d4d4d4"> </span><span style="color:#9cdcfe">y</span><span style="color:#d4d4d4">:      </span><span style="color:#569cd6">i16</span><span style="color:#d4d4d4">,</span></div>
<div class="l" style="left:1321px;top:489px;"><span style="color:#d4d4d4">  </span><span style="color:#569cd6">pub</span><span style="color:#d4d4d4"> </span><span style="color:#9cdcfe">width</span><span style="color:#d4d4d4">:  </span><span style="color:#569cd6">u16</span><span style="color:#d4d4d4">,</span></div>
<div class="l" style="left:1321px;top:532px;"><span style="color:#d4d4d4">  </span><span style="color:#569cd6">pub</span><span style="color:#d4d4d4"> </span><span style="color:#9cdcfe">height</span><span style="color:#d4d4d4">: </span><span style="color:#569cd6">u16</span><span style="color:#d4d4d4">,</span></div>
<div class="l" style="left:1321px;top:575px;"><span style="color:#d4d4d4">}</span></div>
<div class="l" style="left:1321px;top:661px;"><span style="color:#569cd6">impl</span><span style="color:#d4d4d4"> TryFrom&lt;</span><span style="color:#4ec9b0">Vec</span><span style="color:#d4d4d4">&lt;</span><span style="color:#569cd6">i16</span><span style="color:#d4d4d4">&gt;&gt; </span><span style="color:#c586c0">for</span><span style="color:#d4d4d4"> Offset {</span></div>
<div class="l" style="left:1321px;top:704px;"><span style="color:#d4d4d4">  </span><span style="color:#569cd6">type</span><span style="color:#d4d4d4"> Error </span><span style="color:#c586c0">=</span><span style="color:#d4d4d4"> anyhow::Error;</span></div>
<div class="l" style="left:1321px;top:790px;"><span style="color:#d4d4d4">  </span><span style="color:#569cd6">fn</span><span style="color:#d4d4d4"> </span><span style="color:#dcdcaa">try_from</span><span style="color:#d4d4d4">(</span><span style="color:#9cdcfe">values</span><span style="color:#d4d4d4">: </span><span style="color:#4ec9b0">Vec</span><span style="color:#d4d4d4">&lt;</span><span style="color:#569cd6">i16</span><span style="color:#d4d4d4">&gt;) −&gt; </span><span style="color:#4ec9b0">Result</span><span style="color:#d4d4d4">&lt;</span><span style="color:#569cd6">Self</span><span style="color:#d4d4d4">, </span><span style="color:#569cd6">Self::</span><span style="color:#d4d4d4">Error</span></div>
<div class="l" style="left:1321px;top:833px;"><span style="color:#d4d4d4">    </span><span style="color:#c586c0">if</span><span style="color:#d4d4d4"> values.</span><span style="color:#dcdcaa">len</span><span style="color:#d4d4d4">() </span><span style="color:#c586c0">!=</span><span style="color:#d4d4d4"> </span><span style="color:#b5cea8">4</span><span style="color:#d4d4d4"> {</span></div>
<div class="l" style="left:1321px;top:876px;"><span style="color:#d4d4d4">      bail!(</span><span style="color:#ce9178">&quot;offset must have 4 values: {:?}&quot;</span><span style="color:#d4d4d4">, values);</span></div>
<div class="l" style="left:1321px;top:919px;"><span style="color:#d4d4d4">    }</span></div>
<div class="l" style="left:1321px;top:962px;"><span style="color:#d4d4d4">    </span><span style="color:#c586c0">if</span><span style="color:#d4d4d4"> values[</span><span style="color:#b5cea8">2</span><span style="color:#d4d4d4">] </span><span style="color:#c586c0">&lt;</span><span style="color:#d4d4d4"> </span><span style="color:#b5cea8">0</span><span style="color:#d4d4d4"> </span><span style="color:#c586c0">||</span><span style="color:#d4d4d4"> values[</span><span style="color:#b5cea8">3</span><span style="color:#d4d4d4">] </span><span style="color:#c586c0">&lt;</span><span style="color:#d4d4d4"> </span><span style="color:#b5cea8">0</span><span style="color:#d4d4d4"> {</span></div>
<div class="l" style="left:1321px;top:1005px;"><span style="color:#d4d4d4">      bail!(</span><span style="color:#ce9178">&quot;offset width and height must be positive: {:?}</span></div>
<div class="l" style="left:1321px;top:1048px;"><span style="color:#d4d4d4">    }</span></div>
<div class="l" style="left:1321px;top:1091px;"><span style="color:#d4d4d4">    </span><span style="color:#c586c0">if</span><span style="color:#d4d4d4"> values[</span><span style="color:#b5cea8">3</span><span style="color:#d4d4d4">] </span><span style="color:#c586c0">&lt;</span><span style="color:#d4d4d4"> </span><span style="color:#b5cea8">3</span><span style="color:#d4d4d4"> {</span></div>
<div class="l" style="left:1321px;top:1134px;"><span style="color:#d4d4d4">      bail!(</span><span style="color:#ce9178">&quot;offset height must be at least 3: {:?}&quot;</span><span style="color:#d4d4d4">, value</span></div>
<div class="l" style="left:1321px;top:1177px;"><span style="color:#d4d4d4">    }</span></div>
<div class="l" style="left:1321px;top:1263px;"><span style="color:#d4d4d4">    </span><span style="color:#4ec9b0">Ok</span><span style="color:#d4d4d4">(</span><span style="color:#569cd6">Self</span><span style="color:#d4d4d4"> {</span></div>
<div class="l" style="left:1321px;top:1306px;"><span style="color:#d4d4d4">      x:      values[</span><span style="color:#b5cea8">0</span><span style="color:#d4d4d4">],</span></div>
<div class="l" style="left:1321px;top:1349px;"><span style="color:#d4d4d4">      y:      values[</span><span style="color:#b5cea8">1</span><span style="color:#d4d4d4">],</span></div>
<div class="l" style="left:1321px;top:1392px;"><span style="color:#d4d4d4">      width:  values[</span><span style="color:#b5cea8">2</span><span style="color:#d4d4d4">] </span><span style="color:#c586c0">as</span><span style="color:#d4d4d4"> </span><span style="color:#569cd6">u16</span><span style="color:#d4d4d4">,</span></div>
<div class="l" style="left:1321px;top:1435px;"><span style="color:#d4d4d4">      height: values[</span><span style="color:#b5cea8">3</span><span style="color:#d4d4d4">] </span><span style="color:#c586c0">as</span><span style="color:#d4d4d4"> </span><span style="color:#569cd6">u16</span><span style="color:#d4d4d4">,</span></div>
<div class="l" style="left:1321px;top:1478px;"><span style="color:#d4d4d4">    })</span></div>
<div class="l" style="left:1321px;top:1521px;"><span style="color:#d4d4d4">  }</span></div>
<div class="l" style="left:1321px;top:1564px;"><span style="color:#d4d4d4">}</span></div>
<div class="l" style="left:1321px;top:1650px;"><span style="color:#569cd6">impl</span><span style="color:#d4d4d4"> Offset {</span></div>
<div class="l" style="left:1321px;top:1693px;"><span style="color:#d4d4d4">  #[</span><span style="color:#9cdcfe">inline</span><span style="color:#d4d4d4">]</span></div>
<div class="l" style="left:1321px;top:1736px;"><span style="color:#d4d4d4">  </span><span style="color:#569cd6">pub</span><span style="color:#d4d4d4"> </span><span style="color:#569cd6">fn</span><span style="color:#d4d4d4"> </span><span style="color:#dcdcaa">line</span><span style="color:#d4d4d4">() −&gt; </span><span style="color:#569cd6">Self</span><span style="color:#d4d4d4"> { </span><span style="color:#569cd6">Self</span><span style="color:#d4d4d4"> { x: </span><span style="color:#b5cea8">0</span><span style="color:#d4d4d4">, y: </span><span style="color:#b5cea8">0</span><span style="color:#d4d4d4">, width: </span><span style="color:#569cd6">u16</span><span style="color:#d4d4d4">::</span><span style="color:#4fc1ff">MA</span></div>
<div class="l" style="left:1321px;top:1779px;"><span style="color:#d4d4d4">}</span></div>
<div class="l m" style="left:161px;top:145px;"><span style="color:#569cd6">keymap</span></div>
<div class="l m" style="left:161px;top:188px;"><span style="color:#569cd6">log</span></div>
<div class="l m" style="left:161px;top:231px;"><span style="color:#569cd6">manager</span></div>
<div class="l m" style="left:161px;top:274px;"><span style="color:#569cd6">open</span></div>
<div class="l m" style="left:161px;top:317px;"><span style="color:#569cd6">plugin</span></div>
<div class="l m" style="left:161px;top:360px;"><span style="color:#d4d4d4">popup</span></div>
<div class="l m" style="left:161px;top:403px;"><span style="color:#569cd6">preview</span></div>
<div class="l m" style="left:161px;top:446px;"><span style="color:#569cd6">tasks</span></div>
<div class="l m" style="left:161px;top:489px;"><span style="color:#569cd6">theme</span></div>
<div class="l m" style="left:161px;top:532px;"><span style="color:#569cd6">which</span></div>
<div class="l" style="left:161px;top:575px;"><span style="color:#d4d4d4">layout.rs</span></div>
<div class="l" style="left:161px;top:618px;"><span style="color:#d4d4d4">lib.rs</span></div>
<div class="l" style="left:161px;top:661px;"><span style="color:#d4d4d4">macros.rs</span></div>
<div class="l" style="left:161px;top:704px;"><span style="color:#d4d4d4">pattern.rs</span></div>
<div class="l" style="left:161px;top:747px;"><span style="color:#d4d4d4">preset.rs</span></div>
<div class="l" style="left:161px;top:790px;"><span style="color:#d4d4d4">priority.rs</span></div>
<div class="l" style="left:541px;top:145px;"><span style="color:#d4d4d4">confirm.rs</span></div>
<div class="l" style="left:1161px;top:145px;"><span style="color:#d4d4d4">856.0B</span></div>
<div class="l" style="left:541px;top:188px;"><span style="color:#d4d4d4">input.rs</span></div>
<div class="l" style="left:1201px;top:188px;"><span style="color:#d4d4d4">1.0K</span></div>
<div class="l" style="left:541px;top:231px;"><span style="color:#d4d4d4">mod.rs</span></div>
<div class="l" style="left:1161px;top:231px;"><span style="color:#d4d4d4">224.0B</span></div>
<div class="l" style="left:541px;top:274px;"><span style="color:#d4d4d4">offset.rs</span></div>
<div class="l" style="left:1161px;top:274px;"><span style="color:#d4d4d4">855.0B</span></div>
<div class="l" style="left:541px;top:317px;"><span style="color:#d4d4d4">options.rs</span></div>
<div class="l" style="left:1201px;top:317px;"><span style="color:#d4d4d4">4.5K</span></div>
<div class="l" style="left:541px;top:360px;"><span style="color:#d4d4d4">origin.rs</span></div>
<div class="l" style="left:1201px;top:360px;"><span style="color:#d4d4d4">1.3K</span></div>
<div class="l" style="left:541px;top:403px;"><span style="color:#d4d4d4">position.rs</span></div>
<div class="l" style="left:1201px;top:403px;"><span style="color:#d4d4d4">2.0K</span></div>
<div class="l" style="left:541px;top:446px;"><span style="color:#d4d4d4">select.rs</span></div>
<div class="l" style="left:1161px;top:446px;"><span style="color:#d4d4d4">489.0B</span></div>
<div class="l b" style="left:101px;top:1865px;"><span style="color:#1e1e1e">SELECT</span></div>
<div class="l" style="left:261px;top:1865px;"><span style="color:#ffaf00">855.0B</span></div>
<div class="l" style="left:421px;top:1865px;"><span style="color:#d4d4d4">offset.rs</span></div>
<div class="l" style="left:2041px;top:1865px;"><span style="color:#808080"> </span><span style="color:#d6b47a">r</span><span style="color:#f44747">w</span><span style="color:#808080"> </span><span style="color:#d6b47a">r</span><span style="color:#808080"> </span><span style="color:#808080"> </span><span style="color:#d6b47a">r</span><span style="color:#808080"> </span><span style="color:#808080"> </span></div>
<div class="l" style="left:2301px;top:1865px;"><span style="color:#ffaf00">50%</span></div>
<div class="l b" style="left:2421px;top:1865px;"><span style="color:#1e1e1e">4/8</span></div>
</body></html>
